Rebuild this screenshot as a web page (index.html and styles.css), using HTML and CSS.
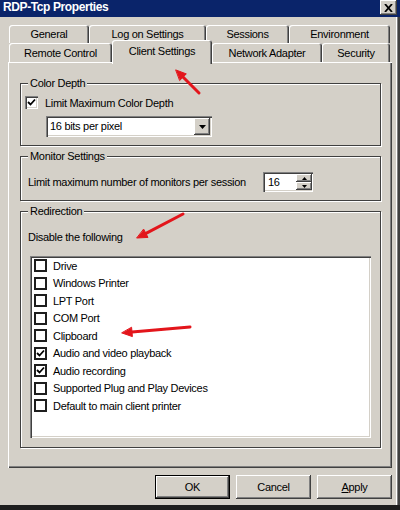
FILE: index.html
```html
<!DOCTYPE html>
<html lang="en">
<head>
    <meta charset="UTF-8">
    <meta name="viewport" content="width=device-width, initial-scale=1.0">
    <title>RDP-Tcp Properties</title>
    <link rel="stylesheet" href="styles.css">
</head>
<body>
    <div class="window">
        <div class="titlebar">
            <span class="title">RDP-Tcp Properties</span>
            <span class="close">
                <svg width="9" height="8" viewBox="0 0 9 8"><path d="M1 0 L8 8 M8 0 L1 8" stroke="#000" stroke-width="1.8"/></svg>
            </span>
        </div>

        <div class="tabs">
            <div class="tab-row back">
                <div class="tab tab-general">General</div>
                <div class="tab tab-logon">Log on Settings</div>
                <div class="tab tab-sessions">Sessions</div>
                <div class="tab tab-environment">Environment</div>
            </div>
            <div class="tab-row front">
                <div class="tab tab-remote">Remote Control</div>
                <div class="tab tab-client active">Client Settings</div>
                <div class="tab tab-network">Network Adapter</div>
                <div class="tab tab-security">Security</div>
            </div>
        </div>

        <div class="panel">
            <fieldset class="group group-color">
                <legend>Color Depth</legend>
                <div class="check-row">
                    <span class="check checked">
                        <svg width="9" height="9" viewBox="0 0 9 9"><path d="M1 4 L3.5 6.5 L8 1.5" fill="none" stroke="#000" stroke-width="1.8"/></svg>
                    </span>
                    Limit Maximum Color Depth
                </div>
                <div class="combo">
                    <span class="combo-text">16 bits per pixel</span>
                    <span class="combo-btn">
                        <svg width="7" height="4" viewBox="0 0 7 4"><path d="M0 0 H7 L3.5 4 Z" fill="#000"/></svg>
                    </span>
                </div>
            </fieldset>

            <fieldset class="group group-monitor">
                <legend>Monitor Settings</legend>
                <div class="monitor-row">
                    <span class="monitor-label">Limit maximum number of monitors per session</span>
                    <div class="spinner">
                        <span class="spinner-text">16</span>
                        <span class="spinner-btns">
                            <span class="spin-btn"><svg width="5" height="3" viewBox="0 0 5 3"><path d="M0 3 H5 L2.5 0 Z" fill="#000"/></svg></span>
                            <span class="spin-btn"><svg width="5" height="3" viewBox="0 0 5 3"><path d="M0 0 H5 L2.5 3 Z" fill="#000"/></svg></span>
                        </span>
                    </div>
                </div>
            </fieldset>

            <fieldset class="group group-redirect">
                <legend>Redirection</legend>
                <div class="disable-label">Disable the following</div>
                <ul class="listbox">
                    <li><span class="check flat"></span>Drive</li>
                    <li><span class="check flat"></span>Windows Printer</li>
                    <li><span class="check flat"></span>LPT Port</li>
                    <li><span class="check flat"></span>COM Port</li>
                    <li><span class="check flat"></span>Clipboard</li>
                    <li><span class="check flat checked"><svg width="9" height="9" viewBox="0 0 9 9"><path d="M1 4 L3.5 6.5 L8 1.5" fill="none" stroke="#000" stroke-width="1.8"/></svg></span>Audio and video playback</li>
                    <li><span class="check flat checked"><svg width="9" height="9" viewBox="0 0 9 9"><path d="M1 4 L3.5 6.5 L8 1.5" fill="none" stroke="#000" stroke-width="1.8"/></svg></span>Audio recording</li>
                    <li><span class="check flat"></span>Supported Plug and Play Devices</li>
                    <li><span class="check flat"></span>Default to main client printer</li>
                </ul>
            </fieldset>
        </div>

        <div class="buttons">
            <button type="button" class="btn default">OK</button>
            <button type="button" class="btn">Cancel</button>
            <button type="button" class="btn"><u>A</u>pply</button>
        </div>

        <!-- marcações vermelhas sobre a captura -->
        <svg class="annotations" width="400" height="510" viewBox="0 0 400 510">
            <g stroke="#e3151b" stroke-width="3" stroke-linecap="round" fill="#e3151b">
                <line x1="199" y1="93" x2="183" y2="77"/>
                <polygon points="176,70 186.3,73.9 179.9,80.3" stroke-width="1"/>
                <line x1="183" y1="214" x2="146" y2="233.4"/>
                <polygon points="137,238 148,237.4 143.8,229.4" stroke-width="1"/>
                <line x1="190" y1="327" x2="132" y2="332"/>
                <polygon points="122,333 132.4,336.6 131.6,327.6" stroke-width="1"/>
            </g>
        </svg>
    </div>
</body>
</html>
```

FILE: styles.css
```css
* {
    box-sizing: border-box;
}

body {
    margin: 0;
    font-family: "Liberation Sans", Arial, sans-serif;
    font-size: 11px;
    letter-spacing: -0.3px;
    color: #000;
    background-color: #d4d0c8;
}

.window {
    position: relative;
    width: 400px;
    height: 510px;
    overflow: hidden;
    background-color: #d4d0c8;
    border-bottom: 5px solid #1e1e1e;
    box-shadow: inset -2px 0 #404040, inset -3px 0 #808080, inset -4px 0 #fff;
}

/* barra de título */
.titlebar {
    height: 17px;
    background-color: #0a246a;
    display: flex;
    justify-content: space-between;
    padding: 0 3px;
}

.title {
    color: #fff;
    font-weight: bold;
    font-size: 12px;
    line-height: 15px;
    letter-spacing: -0.4px;
}

.close {
    width: 17px;
    height: 15px;
    background-color: #d4d0c8;
    display: flex;
    align-items: center;
    justify-content: center;
    box-shadow: inset -1px -1px #404040, inset 1px 1px #fff, inset -2px -2px #808080;
}

/* abas */
.tabs {
    padding: 8px 0 0 9px;
}

.tab-row {
    display: flex;
}

.tab-row.back {
    height: 18px;
}

.tab-row.front {
    height: 19px;
    position: relative;
    z-index: 1;
}

.tab {
    display: flex;
    align-items: center;
    justify-content: center;
    background-color: #d4d0c8;
    border-radius: 3px 3px 0 0;
    box-shadow: inset 1px 1px #fff, inset -1px 0 #404040, inset -2px 0 #808080;
}

.tab-general { width: 80px; }
.tab-logon { width: 117px; }
.tab-sessions { width: 83px; }
.tab-environment { width: 101px; }
.tab-remote { width: 103px; }
.tab-client { width: 100px; }
.tab-network { width: 110px; }
.tab-security { width: 68px; }

.tab.active {
    margin-top: -3px;
    height: 24px;
    padding-bottom: 2px;
}

/* painel da aba */
.panel {
    margin: 0 8px;
    height: 406px;
    padding: 15px 11px 0 12px;
    box-shadow: inset 1px 1px #fff, inset -1px -1px #404040, inset -2px -2px #808080;
}

.group {
    margin: 0;
    border: 1px solid #404040;
    box-shadow: inset 1px 1px #fff, 1px 1px #fff;
    padding: 0 5px 0 4px;
}

.group legend {
    padding: 0 2px;
    margin-left: 3px;
    line-height: 13px;
    background-color: #d4d0c8;
}

.group-color {
    padding-top: 4px;
    padding-bottom: 8px;
}

.group-monitor {
    margin-top: 4px;
    padding-top: 9px;
    padding-bottom: 8px;
}

.group-redirect {
    margin-top: 4px;
    padding-top: 12px;
    padding-bottom: 9px;
}

.check-row {
    height: 17px;
    display: flex;
    align-items: center;
    gap: 7px;
    margin-bottom: 5px;
}

.check {
    width: 13px;
    height: 13px;
    flex: 0 0 13px;
    background-color: #fff;
    display: flex;
    align-items: center;
    justify-content: center;
    box-shadow: inset 1px 1px #808080, inset 2px 2px #404040, inset -1px -1px #fff, inset -2px -2px #d4d0c8;
}

.check.flat {
    border: 2px solid #1e1e1e;
    box-shadow: none;
}

.combo {
    margin-left: 21px;
    width: 166px;
    height: 21px;
    background-color: #fff;
    display: flex;
    justify-content: space-between;
    padding: 2px;
    box-shadow: inset 1px 1px #808080, inset 2px 2px #404040, inset -1px -1px #fff, inset -2px -2px #d4d0c8;
}

.combo-text {
    padding-left: 2px;
    line-height: 17px;
}

.combo-btn,
.spin-btn {
    display: flex;
    align-items: center;
    justify-content: center;
    background-color: #d4d0c8;
    box-shadow: inset -1px -1px #404040, inset 1px 1px #fff, inset -2px -2px #808080;
}

.combo-btn {
    width: 16px;
}

.monitor-row {
    display: flex;
    align-items: center;
    height: 20px;
}

.monitor-label {
    flex: 0 0 235px;
    margin-left: 3px;
}

.spinner {
    width: 50px;
    height: 20px;
    background-color: #fff;
    display: flex;
    justify-content: space-between;
    padding: 2px 1px 2px 2px;
    box-shadow: inset 1px 1px #808080, inset 2px 2px #404040, inset -1px -1px #fff, inset -2px -2px #d4d0c8;
}

.spinner-text {
    padding-left: 3px;
    line-height: 16px;
}

.spinner-btns {
    display: flex;
    flex-direction: column;
    width: 16px;
}

.spin-btn {
    flex: 1;
}

.disable-label {
    margin-left: 3px;
    line-height: 14px;
}

.listbox {
    list-style: none;
    margin: 12px 0 0 5px;
    width: 341px;
    height: 182px;
    padding: 1px 2px;
    background-color: #fff;
    box-shadow: inset 1px 1px #808080, inset 2px 2px #404040, inset -1px -1px #fff, inset -2px -2px #d4d0c8;
}

.listbox li {
    height: 17.5px;
    display: flex;
    align-items: center;
    gap: 6px;
    padding-left: 2px;
}

/* botões inferiores */
.buttons {
    display: flex;
    justify-content: flex-end;
    gap: 6px;
    margin-top: 7px;
    padding-right: 8px;
}

.btn {
    width: 75px;
    height: 24px;
    font-family: inherit;
    font-size: 11px;
    letter-spacing: -0.3px;
    color: #000;
    background-color: #d4d0c8;
    border: none;
    padding: 0;
    box-shadow: inset -1px -1px #404040, inset 1px 1px #fff, inset -2px -2px #808080;
}

.btn.default {
    border: 1px solid #000;
}

.annotations {
    position: absolute;
    top: 0;
    left: 0;
    pointer-events: none;
}
```
